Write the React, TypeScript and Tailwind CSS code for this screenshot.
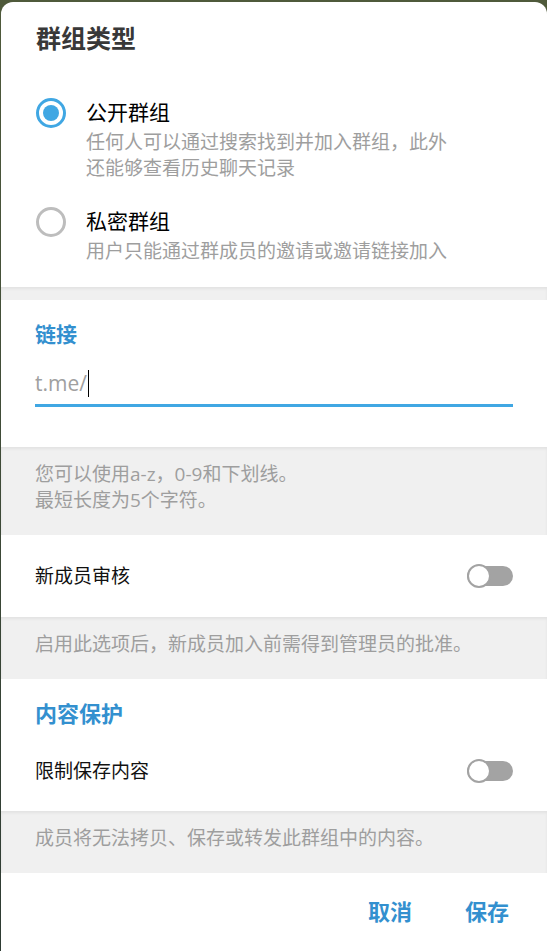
import { useState } from 'react';

const font = { fontFamily: '"Open Sans", "Noto Sans CJK SC", sans-serif' };

function Radio({ checked }: { checked: boolean }) {
  return (
    <div
      className={`w-[30px] h-[30px] rounded-full border-[3px] flex items-center justify-center shrink-0 ${
        checked ? 'border-[#40a7e3]' : 'border-[#bdbdbd]'
      }`}
    >
      {checked && <div className="w-[16px] h-[16px] rounded-full bg-[#40a7e3]" />}
    </div>
  );
}

function Toggle({ on }: { on: boolean }) {
  return (
    <div className="relative w-[46px] h-[24px] flex items-center">
      <div className={`w-full h-[20px] rounded-full ${on ? 'bg-[#40a7e3]' : 'bg-[#a3a3a3]'}`} />
      <div
        className={`absolute top-0 w-[24px] h-[24px] rounded-full bg-white border-[2px] ${
          on ? 'right-0 border-[#40a7e3]' : 'left-0 border-[#a3a3a3]'
        }`}
      />
    </div>
  );
}

function Hint({ children }: { children: React.ReactNode }) {
  return (
    <div className="bg-[#f0f0f0] shadow-[inset_0_2px_3px_rgba(0,0,0,0.06)] px-[34px] pt-[14px] pb-[22px] text-[19px] leading-[26px] text-[#9e9e9e]">
      {children}
    </div>
  );
}

export default function App() {
  const [type] = useState<'public' | 'private'>('public');

  const options = [
    {
      key: 'public',
      label: '公开群组',
      desc: '任何人可以通过搜索找到并加入群组，此外还能够查看历史聊天记录',
      gap: 'mt-[43px]',
    },
    {
      key: 'private',
      label: '私密群组',
      desc: '用户只能通过群成员的邀请或邀请链接加入',
      gap: 'mt-[25px]',
    },
  ];

  return (
    <div className="w-[547px] h-[951px] overflow-hidden bg-gradient-to-b from-[#4f5a3b] to-[#2e3b33] pl-[1px] pt-[2px]" style={font}>
      <div className="w-[546px] h-[960px] bg-white rounded-[12px] overflow-hidden flex flex-col">
        {/* Group type */}
        <div className="px-[35px] pt-[20px] pb-[23px]">
          <div className="text-[25px] leading-[32px] font-semibold text-[#383838]">群组类型</div>
          {options.map((opt) => (
            <div key={opt.key} className={`flex gap-[20px] ${opt.gap}`}>
              <div className="pt-[1px]">
                <Radio checked={type === opt.key} />
              </div>
              <div>
                <div className="text-[21px] leading-[30px] text-black">{opt.label}</div>
                <div className="mt-[2px] max-w-[370px] text-[19px] leading-[26px] text-[#9e9e9e]">{opt.desc}</div>
              </div>
            </div>
          ))}
        </div>

        <div className="h-[13px] bg-[#f0f0f0] shadow-[inset_0_2px_3px_rgba(0,0,0,0.06)]" />

        {/* Link */}
        <div className="px-[34px] pt-[20px] pb-[40px]">
          <div className="text-[21px] leading-[28px] font-bold text-[#3390cf]">链接</div>
          <div className="mt-[20px] border-b-[3px] border-[#40a7e3] pb-[6px] flex items-center">
            <span className="text-[21px] leading-[30px] text-[#a0a0a0]">t.me/</span>
            <span className="ml-[1px] w-[1px] h-[27px] bg-black" />
          </div>
        </div>

        <Hint>
          您可以使用a-z，0-9和下划线。
          <br />
          最短长度为5个字符。
        </Hint>

        <div className="h-[82px] px-[34px] flex items-center justify-between">
          <span className="text-[19px] text-[#111111]">新成员审核</span>
          <Toggle on={false} />
        </div>

        <Hint>启用此选项后，新成员加入前需得到管理员的批准。</Hint>

        {/* Content protection */}
        <div className="px-[34px] pt-[20px] pb-[4px]">
          <div className="text-[22px] leading-[28px] font-bold text-[#3390cf]">内容保护</div>
        </div>
        <div className="h-[80px] px-[34px] flex items-center justify-between">
          <span className="text-[19px] text-[#111111]">限制保存内容</span>
          <Toggle on={false} />
        </div>

        <Hint>成员将无法拷贝、保存或转发此群组中的内容。</Hint>

        <div className="flex justify-end gap-[53px] pr-[38px] pt-[24px]">
          <button className="text-[22px] leading-[28px] font-bold text-[#3390cf]">取消</button>
          <button className="text-[22px] leading-[28px] font-bold text-[#3390cf]">保存</button>
        </div>
      </div>
    </div>
  );
}
